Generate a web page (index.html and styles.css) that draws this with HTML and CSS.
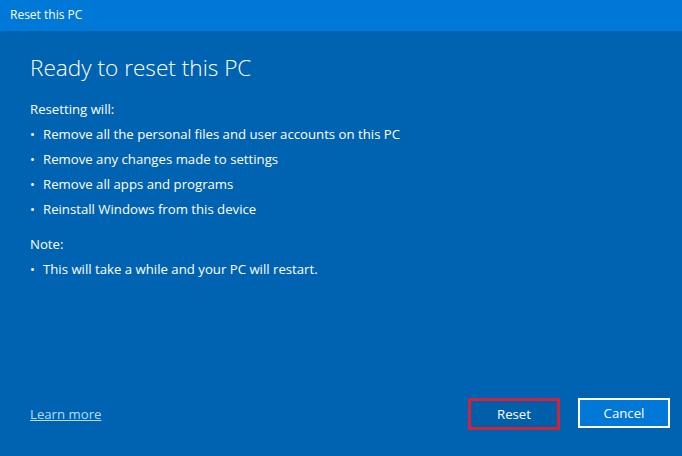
FILE: index.html
```html
<!DOCTYPE html>
<html lang="en">
<head>
    <meta charset="UTF-8">
    <meta name="viewport" content="width=device-width, initial-scale=1.0">
    <title>Reset this PC</title>
    <link rel="stylesheet" href="styles.css">
</head>
<body>
<div class="window">
    <div class="titlebar">Reset this PC</div>
    <div class="content">
        <h1 class="heading">Ready to reset this PC</h1>
        <p class="label">Resetting will:</p>
        <ul class="list">
            <li>Remove all the personal files and user accounts on this PC</li>
            <li>Remove any changes made to settings</li>
            <li>Remove all apps and programs</li>
            <li>Reinstall Windows from this device</li>
        </ul>
        <p class="label note">Note:</p>
        <ul class="list">
            <li>This will take a while and your PC will restart.</li>
        </ul>
    </div>
    <div class="footer">
        <a class="link" href="#">Learn more</a>
        <div class="buttons">
            <button class="btn btn-reset">Reset</button>
            <button class="btn btn-cancel">Cancel</button>
        </div>
    </div>
</div>
</body>
</html>
```

FILE: styles.css
```css
* {
margin: 0;
padding: 0;
box-sizing: border-box;
}

body {
font-family: "Open Sans", "Noto Sans", sans-serif;
color: #ffffff;
background-color: #0063b1;
}

.window {
display: flex;
flex-direction: column;
width: 682px;
height: 456px;
background-color: #0063b1;
}

.titlebar {
height: 31px;
background-color: #0078d7;
font-size: 12px;
line-height: 30px;
padding-left: 10px;
}

.content {
flex: 1;
padding: 20px 0 0 30px;
}

.heading {
font-size: 22.6px;
font-weight: 300;
line-height: 34px;
margin-bottom: 12px;
}

.label {
font-size: 13.2px;
line-height: 25px;
}

.note {
margin-top: 10px;
}

.list {
list-style: none;
font-size: 13.2px;
line-height: 25px;
}

.list li::before {
content: "\2022";
display: inline-block;
width: 13px;
font-size: 13px;
}

.footer {
display: flex;
justify-content: space-between;
align-items: center;
padding: 0 12px 26px 30px;
}

.link {
color: #b3dcff;
font-size: 13.2px;
}

.buttons {
display: flex;
gap: 18px;
}

.btn {
font-family: inherit;
font-size: 13.2px;
color: #ffffff;
height: 30px;
cursor: pointer;
}

.btn-reset {
width: 92px;
height: 32px;
background-color: #005fa8;
border: 3px solid #d0243a;
}

.btn-cancel {
width: 92px;
background-color: #0078d7;
border: 2px solid #ffffff;
}
```
